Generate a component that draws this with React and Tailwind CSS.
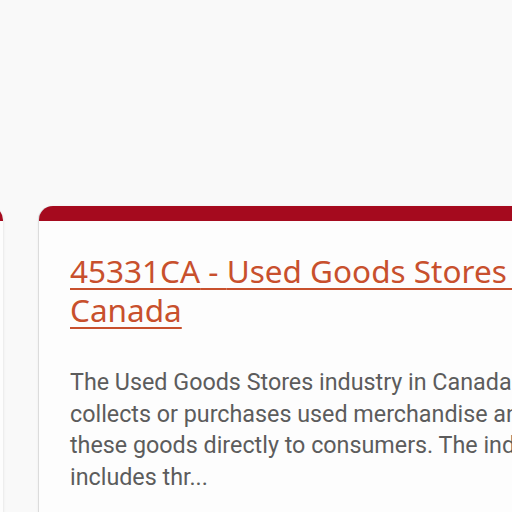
const cards = [
  {
    code: "45331CA",
    title: "Used Goods Stores in Canada",
    text: "The Used Goods Stores industry in Canada collects or purchases used merchandise and sells these goods directly to consumers. The industry includes thr...",
  },
];

const Card = ({ code, title, text }) => {
  return (
    <div className="w-[584px] shrink-0 rounded-t-[14px] border-t-[15px] border-[#a50a1e] bg-[#fdfdfd] shadow-[-1px_0_0_#dcdcdc,0_1px_3px_rgba(0,0,0,0.12)] px-[31px] pt-[30px] pb-8">
      <a
        href="#"
        className="block font-['Noto_Sans',sans-serif] text-[31.5px] leading-[39px] text-[#c8502d] underline underline-offset-[5px] decoration-[1.5px]"
      >
        {code} - {title}
      </a>
      <p className="mt-[38px] font-['Roboto',sans-serif] text-[23.3px] leading-[31.7px] text-[#5c5c5c]">
        {text}
      </p>
    </div>
  );
};

export default function App() {
  return (
    <div className="min-h-[512px] w-[512px] overflow-hidden bg-[#f9f9f9] pt-[206px]">
      <div className="flex gap-[36px] -ml-[581px]">
        <Card code="45330CA" title="Used Goods Stores" text="" />
        {cards.map((c) => (
          <Card key={c.code} {...c} />
        ))}
      </div>
    </div>
  );
}
